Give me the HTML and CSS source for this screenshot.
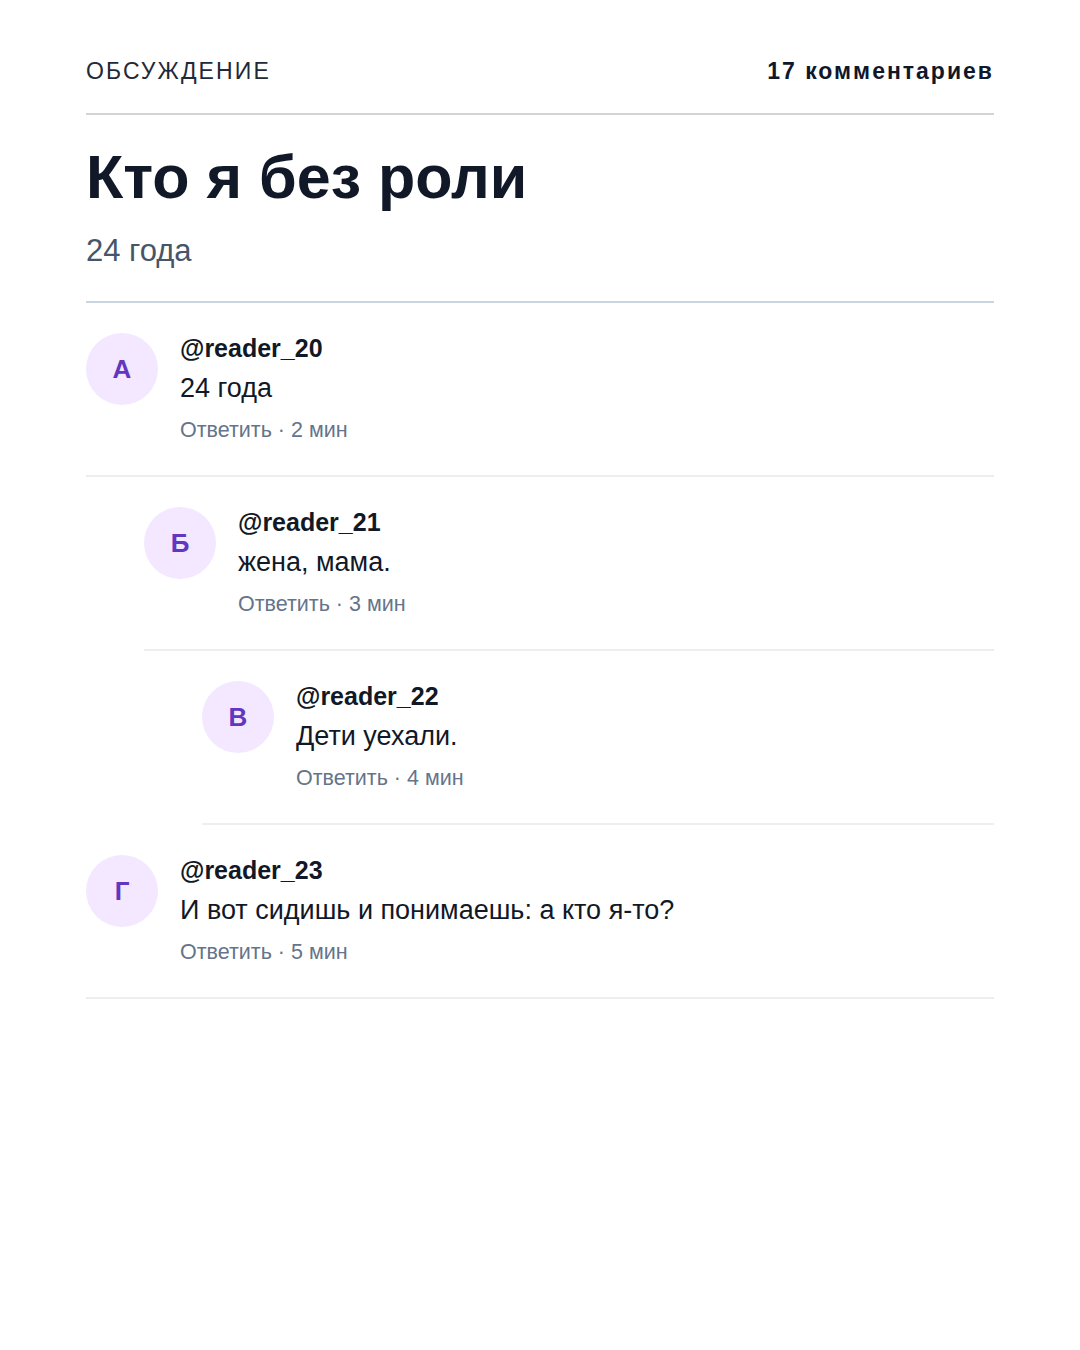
FILE: index.html
```html
<!DOCTYPE html>
<html lang="ru">
  <head>
    <meta charset="UTF-8" />
    <title>Обсуждение</title>
    <link rel="stylesheet" href="styles.css">
  </head>
  <body>
    <div class="page">
      <!-- Top bar: section label and comment count -->
      <header class="topbar">
        <span class="section">ОБСУЖДЕНИЕ</span>
        <span class="count">17 комментариев</span>
      </header>

      <!-- Post title -->
      <div class="post">
        <h1>Кто я без роли</h1>
        <p class="subtitle">24 года</p>
      </div>

      <!-- Comment thread -->
      <ul class="thread">
        <li class="comment">
          <div class="avatar">А</div>
          <div class="body">
            <div class="author">@reader_20</div>
            <div class="text">24 года</div>
            <div class="meta">Ответить · 2 мин</div>
          </div>
        </li>
        <li class="comment level-1">
          <div class="avatar">Б</div>
          <div class="body">
            <div class="author">@reader_21</div>
            <div class="text">жена, мама.</div>
            <div class="meta">Ответить · 3 мин</div>
          </div>
        </li>
        <li class="comment level-2">
          <div class="avatar">В</div>
          <div class="body">
            <div class="author">@reader_22</div>
            <div class="text">Дети уехали.</div>
            <div class="meta">Ответить · 4 мин</div>
          </div>
        </li>
        <li class="comment">
          <div class="avatar">Г</div>
          <div class="body">
            <div class="author">@reader_23</div>
            <div class="text">И вот сидишь и понимаешь: а кто я-то?</div>
            <div class="meta">Ответить · 5 мин</div>
          </div>
        </li>
      </ul>
    </div>
  </body>
</html>
```

FILE: styles.css
```css
/* Page frame */
body {
  margin: 0;
  background: #fff;
  font-family: "Liberation Sans", Arial, sans-serif;
  color: #0f172a;
}

.page {
  padding: 58px 86px;
}

/* Header row */
.topbar {
  display: flex;
  justify-content: space-between;
  align-items: baseline;
  padding-bottom: 28px;
  border-bottom: 2px solid #d4d4d8;
}

.section {
  font-size: 23px;
  letter-spacing: 2.1px;
  color: #1f2937;
}

.count {
  font-size: 23px;
  font-weight: bold;
  letter-spacing: 2px;
  color: #0f172a;
}

/* Title block */
.post {
  padding: 27px 0 32px;
  border-bottom: 2px solid #cbd5e1;
}

h1 {
  margin: 0;
  font-size: 61px;
  line-height: 70px;
  font-weight: bold;
  color: #111827;
}

.subtitle {
  margin: 20px 0 0;
  font-size: 31px;
  line-height: 37px;
  color: #475569;
}

/* Thread */
.thread {
  list-style: none;
  margin: 0;
  padding: 0;
}

.comment {
  display: flex;
  gap: 22px;
  padding: 27px 0 31px;
  border-bottom: 2px solid #eeeeee;
}

.level-1 {
  margin-left: 58px;
}

.level-2 {
  margin-left: 116px;
}

.avatar {
  flex: none;
  width: 72px;
  height: 72px;
  margin-top: 3px;
  border-radius: 50%;
  background: #f3e8ff;
  color: #6236c0;
  display: flex;
  align-items: center;
  justify-content: center;
  font-size: 26px;
  font-weight: bold;
}

.author {
  font-size: 25px;
  line-height: 36px;
  font-weight: bold;
  color: #111827;
}

.text {
  margin-top: 4px;
  font-size: 27px;
  line-height: 36px;
  color: #111827;
}

.meta {
  margin-top: 10px;
  font-size: 21.5px;
  line-height: 28px;
  color: #64748b;
}
```
